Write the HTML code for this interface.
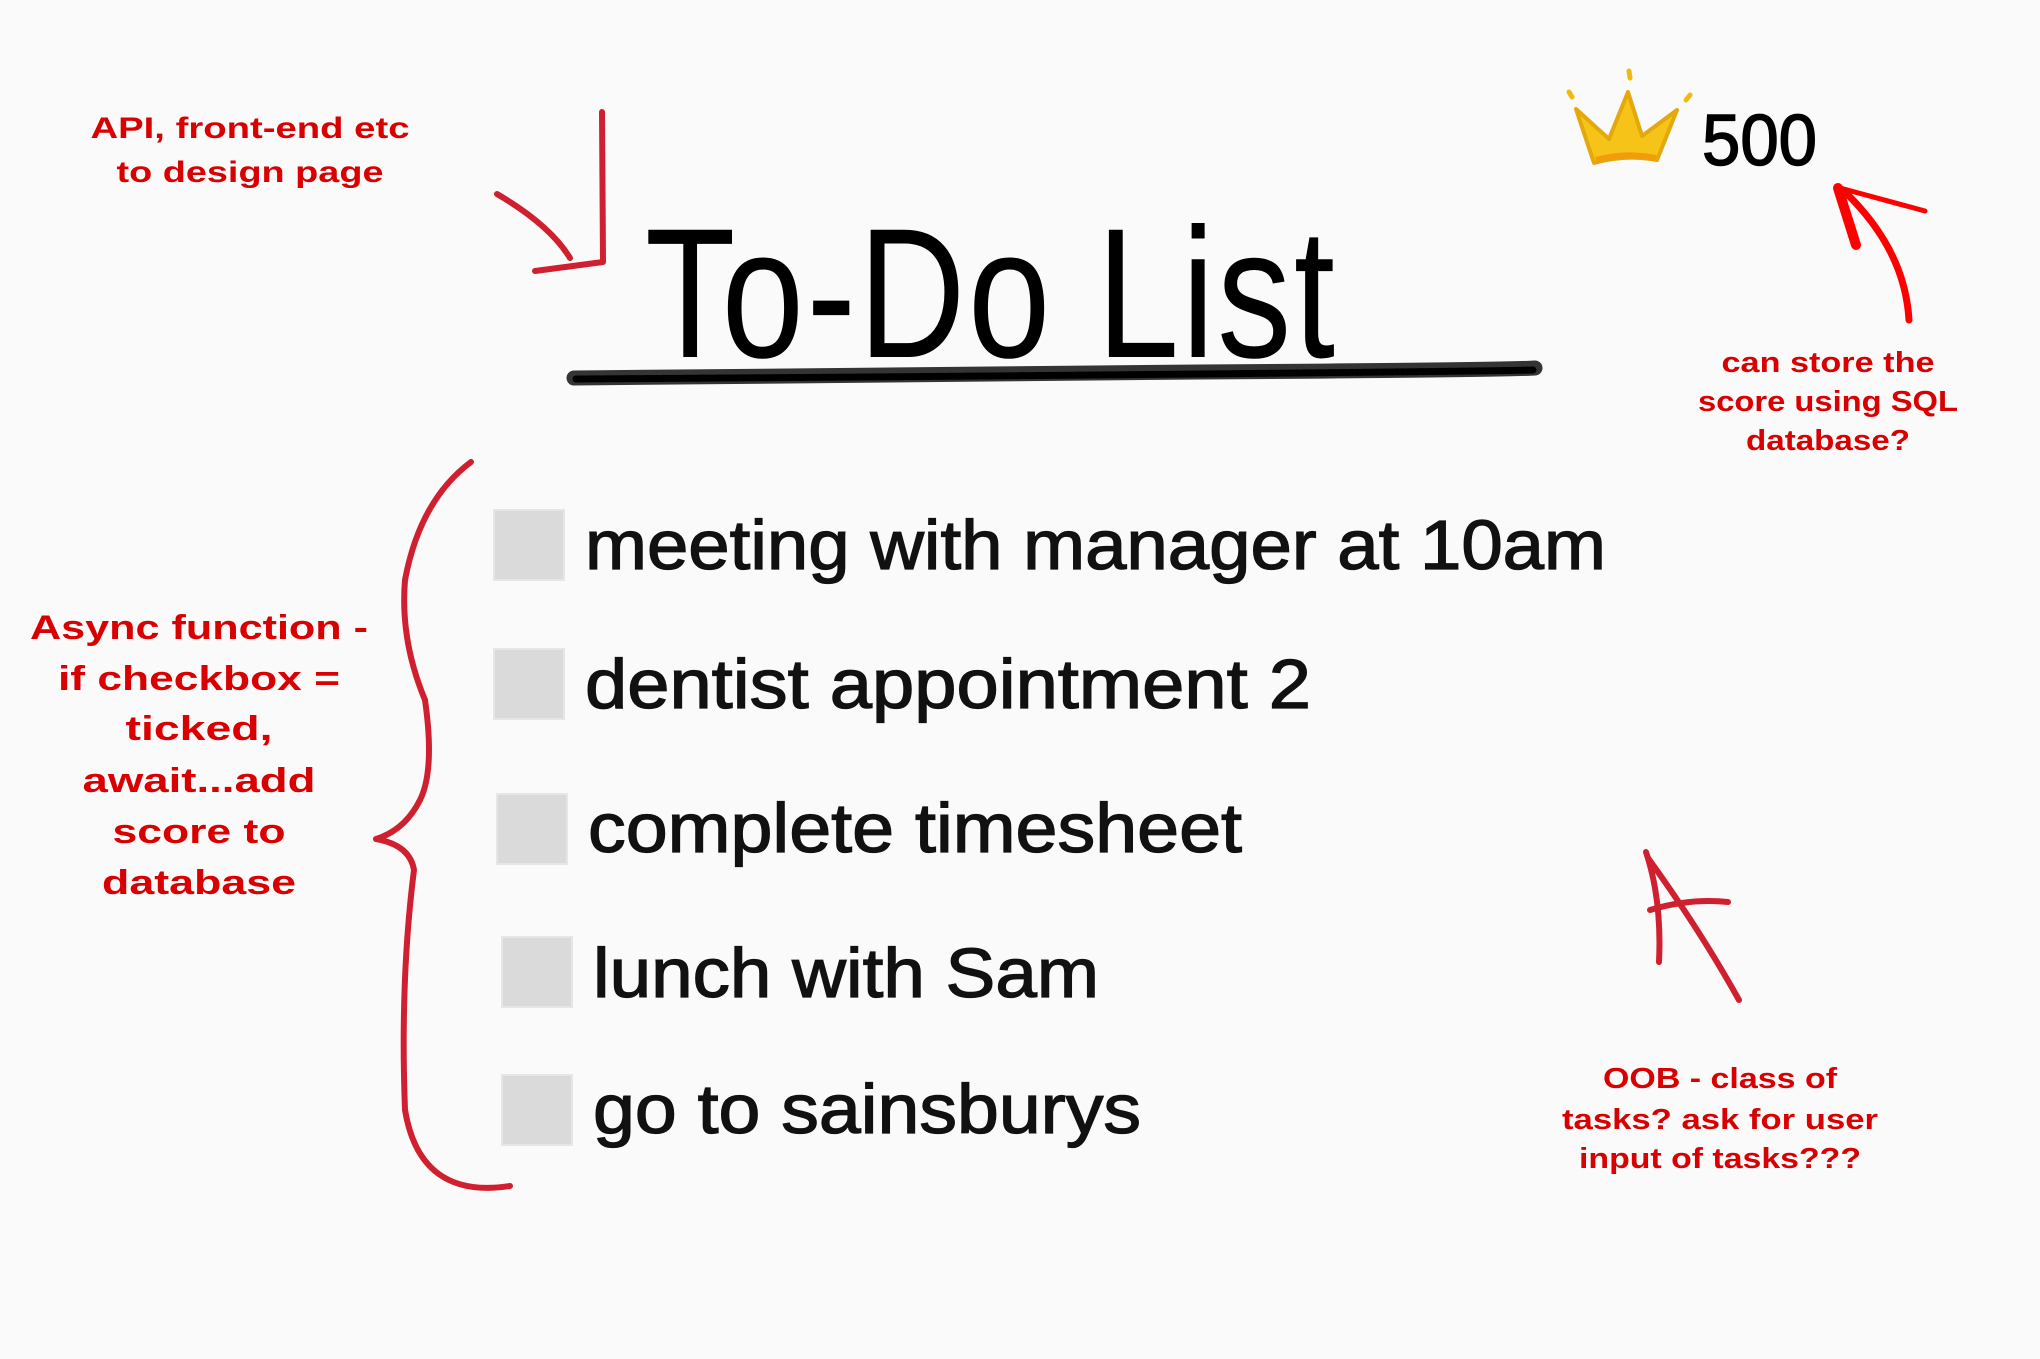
<!DOCTYPE html>
<html><head><meta charset="utf-8"><style>
html,body{margin:0;padding:0;background:#fafafa;}
svg{display:block}
</style></head><body>
<svg width="2040" height="1359" viewBox="0 0 2040 1359" xmlns="http://www.w3.org/2000/svg">
<rect width="2040" height="1359" fill="#fafafa"/>
<g font-family="Liberation Sans, Arial, sans-serif" font-weight="bold" fill="#d80000" text-anchor="middle">
<text x="250" y="138" font-size="30" textLength="319" lengthAdjust="spacingAndGlyphs">API, front-end etc</text>
<text x="250" y="182" font-size="30" textLength="267" lengthAdjust="spacingAndGlyphs">to design page</text>
<g font-size="34">
<text x="199" y="639" textLength="338" lengthAdjust="spacingAndGlyphs">Async function -</text>
<text x="199" y="690" textLength="282" lengthAdjust="spacingAndGlyphs">if checkbox =</text>
<text x="199" y="740" textLength="147" lengthAdjust="spacingAndGlyphs">ticked,</text>
<text x="199" y="792" textLength="233" lengthAdjust="spacingAndGlyphs">await...add</text>
<text x="199" y="843" textLength="173" lengthAdjust="spacingAndGlyphs">score to</text>
<text x="199" y="894" textLength="194" lengthAdjust="spacingAndGlyphs">database</text>
</g>
<g font-size="29">
<text x="1828" y="372" textLength="213" lengthAdjust="spacingAndGlyphs">can store the</text>
<text x="1828" y="411" textLength="260" lengthAdjust="spacingAndGlyphs">score using SQL</text>
<text x="1828" y="450" textLength="164" lengthAdjust="spacingAndGlyphs">database?</text>
<text x="1720" y="1088" textLength="234" lengthAdjust="spacingAndGlyphs">OOB - class of</text>
<text x="1720" y="1129" textLength="316" lengthAdjust="spacingAndGlyphs">tasks? ask for user</text>
<text x="1720" y="1168" textLength="282" lengthAdjust="spacingAndGlyphs">input of tasks???</text>
</g>
</g>
<g fill="none" stroke="#d0202f" stroke-width="6" stroke-linecap="round" stroke-linejoin="round">
<path d="M602 112 L603 262 L535 271"/>
<path d="M497 194 Q550 225 570 258"/>
<path d="M471 462 Q420 500 405 580 Q400 640 425 700 Q435 770 420 800 Q405 830 376 839 Q410 845 414 870 Q400 980 405 1110 Q420 1200 510 1186"/>
<path d="M1646 852 Q1662 900 1659 962"/>
<path d="M1650 910 Q1690 898 1728 902"/>
<path d="M1648 858 Q1700 930 1739 1000"/>
</g>
<g fill="none" stroke="#ff0000" stroke-linecap="round" stroke-linejoin="round">
<path d="M1909 320 Q1905 250 1845 192" stroke-width="7"/>
<path d="M1838 188 L1856 245" stroke-width="10"/>
<path d="M1840 188 Q1885 200 1925 211" stroke-width="5"/>
</g>
<g transform="translate(645 357) scale(1 1.25)">
<text x="0" y="0" font-family="Liberation Sans, Arial, sans-serif" font-size="148" fill="#000" textLength="690" lengthAdjust="spacing">To-Do List</text>
</g>
<path d="M574 378 Q900 374 1200 372 T1535 368" fill="none" stroke="#111" stroke-width="15" stroke-linecap="round" opacity="0.85"/>
<path d="M576 379 Q900 377 1200 374 T1533 370" fill="none" stroke="#000" stroke-width="7" stroke-dasharray="3 2" stroke-linecap="round"/>
<g>
<path d="M1576 109 L1609 139 L1628 92 L1642 136 L1677 110 L1657 160 Q1625 154 1594 163 Z" fill="#f6c419" stroke="#e4a80a" stroke-width="4" stroke-linejoin="round"/>
<path d="M1596 160 Q1625 152 1656 158" fill="none" stroke="#f39c0a" stroke-width="6"/>
<line x1="1629" y1="71" x2="1630" y2="78" stroke="#f2b90f" stroke-width="5" stroke-linecap="round"/>
<line x1="1569" y1="92" x2="1572" y2="97" stroke="#f2b90f" stroke-width="5" stroke-linecap="round"/>
<line x1="1686" y1="100" x2="1690" y2="95" stroke="#f2b90f" stroke-width="5" stroke-linecap="round"/>
</g>
<text x="1702" y="165" font-family="Liberation Sans, Arial, sans-serif" font-size="72" fill="#000" stroke="#000" stroke-width="1.5" textLength="115" lengthAdjust="spacingAndGlyphs">500</text>
<g fill="#dadada" stroke="#e6e6e6" stroke-width="2">
<rect x="494" y="510" width="70" height="70"/>
<rect x="494" y="649" width="70" height="70"/>
<rect x="497" y="794" width="70" height="70"/>
<rect x="502" y="937" width="70" height="70"/>
<rect x="502" y="1075" width="70" height="70"/>
</g>
<g font-family="Liberation Sans, Arial, sans-serif" font-size="70" fill="#111" stroke="#111" stroke-width="1.3">
<text x="585" y="569" textLength="1021" lengthAdjust="spacingAndGlyphs">meeting with manager at 10am</text>
<text x="585" y="708" textLength="726" lengthAdjust="spacingAndGlyphs">dentist appointment 2</text>
<text x="588" y="852" textLength="654" lengthAdjust="spacingAndGlyphs">complete timesheet</text>
<text x="593" y="997" textLength="506" lengthAdjust="spacingAndGlyphs">lunch with Sam</text>
<text x="593" y="1133" textLength="548" lengthAdjust="spacingAndGlyphs">go to sainsburys</text>
</g>
</svg>
</body></html>
